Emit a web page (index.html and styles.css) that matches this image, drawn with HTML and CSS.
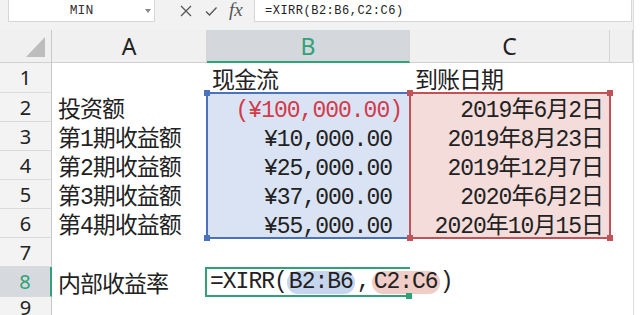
FILE: index.html
```html
<!DOCTYPE html>
<html lang="zh-CN">
<head>
    <meta charset="UTF-8">
    <meta name="viewport" content="width=device-width, initial-scale=1.0">
    <title>XIRR</title>
    <link rel="stylesheet" href="styles.css">
</head>
<body>
    <div class="app">
        <div class="topbar">
            <div class="namebox">
                <span>MIN</span>
                <svg class="caret" width="6" height="4" viewBox="0 0 6 4"><path d="M0 0h6L3 4z" fill="#888"/></svg>
            </div>
            <div class="tools">
                <svg width="14" height="14" viewBox="0 0 14 14"><path d="M2 2l10 10M12 2L2 12" stroke="#555" stroke-width="1.3" fill="none"/></svg>
                <svg width="14" height="14" viewBox="0 0 14 14"><path d="M2 7.5l3.5 3.5L12.5 3.5" stroke="#555" stroke-width="1.3" fill="none"/></svg>
                <span class="fx">fx</span>
            </div>
            <div class="formula">=XIRR(B2:B6,C2:C6)</div>
        </div>

        <div class="sheet">
            <div class="corner">
                <svg width="20" height="20" viewBox="0 0 20 20"><path d="M0 20H19V0z" fill="#bdbdbd"/></svg>
            </div>
            <div class="colhead">A</div>
            <div class="colhead active">B</div>
            <div class="colhead">C</div>
            <div class="colhead"></div>

            <div class="rowhead" style="grid-row: 2">1</div>
            <div class="rowhead" style="grid-row: 3">2</div>
            <div class="rowhead" style="grid-row: 4">3</div>
            <div class="rowhead" style="grid-row: 5">4</div>
            <div class="rowhead" style="grid-row: 6">5</div>
            <div class="rowhead" style="grid-row: 7">6</div>
            <div class="rowhead" style="grid-row: 8">7</div>
            <div class="rowhead active" style="grid-row: 9">8</div>
            <div class="rowhead last" style="grid-row: 10">9</div>

            <div class="cell label" style="grid-row: 3">投资额</div>
            <div class="cell label" style="grid-row: 4">第1期收益额</div>
            <div class="cell label" style="grid-row: 5">第2期收益额</div>
            <div class="cell label" style="grid-row: 6">第3期收益额</div>
            <div class="cell label" style="grid-row: 7">第4期收益额</div>
            <div class="cell label" style="grid-row: 9">内部收益率</div>

            <div class="cell title col-b">现金流</div>
            <div class="cell title col-c">到账日期</div>

            <div class="range blue">
                <div class="val neg">(¥100,000.00)</div>
                <div class="val pos">¥10,000.00</div>
                <div class="val pos">¥25,000.00</div>
                <div class="val pos">¥37,000.00</div>
                <div class="val pos">¥55,000.00</div>
                <i class="handle tl"></i><i class="handle tr"></i>
                <i class="handle bl"></i><i class="handle br"></i>
            </div>

            <div class="range red">
                <div class="val date">2019年6月2日</div>
                <div class="val date">2019年8月23日</div>
                <div class="val date">2019年12月7日</div>
                <div class="val date">2020年6月2日</div>
                <div class="val date">2020年10月15日</div>
                <i class="handle tl"></i><i class="handle tr"></i>
                <i class="handle bl"></i><i class="handle br"></i>
            </div>

            <div class="cell edit">
                =XIRR(<span class="ref ref-b">B2:B6</span><span class="comma">,</span><span class="ref ref-c">C2:C6</span>)
                <i class="handle br"></i>
            </div>
        </div>
    </div>
</body>
</html>
```

FILE: styles.css
```css
body {
    margin: 0;
    background: #fff;
    font-family: "Noto Sans", "Noto Sans CJK SC", sans-serif;
    color: #222;
}
.app {
    width: 633px;
    height: 315px;
    overflow: hidden;
    border-right: 1px solid #dcdcdc;
}
.topbar {
    display: flex;
    align-items: stretch;
    height: 22px;
    padding: 0 0 8px 8px;
    background: #f2f2f2;
}
.namebox {
    width: 145px;
    margin-top: -1px;
    display: flex;
    align-items: center;
    justify-content: center;
    position: relative;
    background: #fff;
    border: 1px solid #d6d6d6;
    font-family: "Liberation Mono", monospace;
    font-size: 13px;
    color: #333;
}
.caret {
    position: absolute;
    right: 3px;
    top: 9px;
}
.tools {
    width: 99px;
    display: flex;
    align-items: center;
    gap: 11px;
    padding-left: 24px;
    box-sizing: border-box;
}
.fx {
    font-family: "Liberation Serif", serif;
    font-style: italic;
    font-size: 19px;
    color: #555;
    margin-top: -3px;
}
.formula {
    width: 366px;
    margin-top: -1px;
    padding-left: 10px;
    display: flex;
    align-items: center;
    background: #fff;
    border: 1px solid #d6d6d6;
    font-family: "Liberation Mono", monospace;
    font-size: 12px;
    letter-spacing: 0.5px;
    color: #222;
}
.sheet {
    display: grid;
    grid-template-columns: 52px 155px 203px 200px 23px;
    grid-template-rows: 33px 30px 29px 29px 29px 29px 29px 29px 30px 30px;
    font-family: "Liberation Mono", "Noto Sans CJK SC", monospace;
    font-size: 23px;
    letter-spacing: -1px;
}
.corner {
    background: #f0f0f0;
    border-right: 1px solid #c8c8c8;
    border-bottom: 1px solid #d0d0d0;
    box-sizing: border-box;
    padding: 7px 0 0 26px;
}
.colhead {
    background: #f0f0f0;
    border-right: 1px solid #d4d4d4;
    border-bottom: 1px solid #d0d0d0;
    box-sizing: border-box;
    display: flex;
    align-items: center;
    justify-content: center;
    font-family: "Noto Sans", sans-serif;
    font-size: 23px;
    letter-spacing: 0;
    color: #222;
}
.colhead.active {
    background: #d4d7db;
    color: #2fa277;
    border-bottom: 2px solid #2fa277;
}
.rowhead {
    grid-column: 1;
    background: #f3f3f3;
    border-right: 1px solid #c8c8c8;
    border-bottom: 1px solid #dadada;
    box-sizing: border-box;
    display: flex;
    align-items: center;
    justify-content: center;
    font-family: "Noto Sans", sans-serif;
    font-size: 20px;
    letter-spacing: 0;
    color: #222;
}
.rowhead.active {
    background: #d6d9dd;
    color: #2fa277;
    border-right: 2px solid #2fa277;
}
.rowhead.last {
    align-items: flex-start;
    line-height: 22px;
}
.cell {
    display: flex;
    align-items: flex-end;
    line-height: 21px;
    white-space: nowrap;
}
.label {
    grid-column: 2;
    padding-left: 6px;
}
.title {
    grid-row: 2;
    padding-left: 5px;
}
.col-b { grid-column: 3; }
.col-c { grid-column: 4; }
.range {
    grid-row: 3 / 8;
    position: relative;
    display: flex;
    flex-direction: column;
}
.range.blue {
    grid-column: 3;
    background: #dae3f3;
    outline: 2px solid #4a72bd;
    outline-offset: -1px;
}
.range.red {
    grid-column: 4;
    background: #f3dcda;
    outline: 2px solid #bf5358;
    outline-offset: -1px;
}
.val {
    height: 29px;
    display: flex;
    align-items: flex-end;
    justify-content: flex-end;
    line-height: 21px;
    white-space: nowrap;
}
.neg {
    color: #d33a4a;
    padding-right: 8px;
}
.pos { padding-right: 18px; }
.date { padding-right: 7px; }
.handle {
    position: absolute;
    width: 6px;
    height: 6px;
}
.blue .handle { background: #4a72bd; }
.red .handle { background: #bf5358; }
.tl { left: -3px; top: -3px; }
.tr { right: -3px; top: -3px; }
.bl { left: -3px; bottom: -3px; }
.br { right: -3px; bottom: -3px; }
.edit {
    grid-column: 3;
    grid-row: 9;
    position: relative;
    margin-left: -2px;
    padding-left: 3px;
    border: 2px solid #2fa277;
    border-right: none;
    align-items: center;
    line-height: 23px;
}
.edit .handle {
    background: #2fa277;
    right: -2px;
    bottom: -4px;
}
.ref {
    display: inline-block;
    border-radius: 11px;
    padding: 0 2px;
}
.ref-b { background: #c7d6ef; }
.ref-c { background: #f0cdc6; }
.comma { padding: 0 2px; }
```
